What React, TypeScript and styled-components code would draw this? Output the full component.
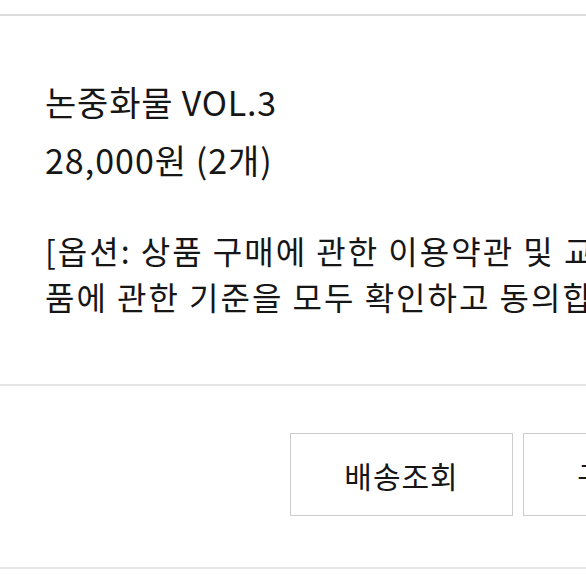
import React from 'react';
import styled, { createGlobalStyle } from 'styled-components';

const GlobalStyle = createGlobalStyle`
  body {
    margin: 0;
    background: #fff;
    overflow: hidden;
    font-family: 'Noto Sans CJK KR', 'Noto Sans', sans-serif;
    color: #161616;
  }
`;

type Action = { label: string };

const actions: Action[] = [{ label: '배송조회' }, { label: '구매확정' }];

const App: React.FC = () => {
  return (
    <>
      <GlobalStyle />
      <Page>
        <TopStrip />
        <Info>
          <Title>논중화물 VOL.3</Title>
          <Price>28,000원 (2개)</Price>
          <Option>
            [옵션: 상품 구매에 관한 이용약관 및 교환/반
            <br />
            품에 관한 기준을 모두 확인하고 동의합니다.]
          </Option>
        </Info>
        <Actions>
          {actions.map((a) => (
            <ActionButton key={a.label}>{a.label}</ActionButton>
          ))}
        </Actions>
      </Page>
    </>
  );
};

const Page = styled.main`
  width: 760px;
  display: flex;
  flex-direction: column;
`;

const TopStrip = styled.div`
  height: 14px;
  border-bottom: 2px solid #dddddd;
`;

const Info = styled.section`
  padding: 66px 0 65px 45px;
  display: flex;
  flex-direction: column;
`;

const Title = styled.h2`
  margin: 0 0 18px;
  font-size: 34px;
  line-height: 40px;
  font-weight: 400;
  letter-spacing: 0.8px;
  white-space: nowrap;
`;

const Price = styled.p`
  margin: 0 0 47px;
  font-size: 34px;
  line-height: 40px;
  font-weight: 400;
  letter-spacing: 1px;
  white-space: nowrap;
`;

const Option = styled.p`
  margin: 0;
  font-size: 32px;
  line-height: 46px;
  font-weight: 400;
  letter-spacing: 2px;
  white-space: nowrap;
`;

const Actions = styled.div`
  border-top: 2px solid #e4e4e4;
  border-bottom: 2px solid #e4e4e4;
  padding: 47px 14px 51px 0;
  display: flex;
  justify-content: flex-end;
  gap: 10px;
`;

const ActionButton = styled.button`
  width: 223px;
  height: 83px;
  background: #fff;
  border: 1px solid #cccccc;
  font-family: 'Noto Sans CJK KR', sans-serif;
  font-size: 30px;
  letter-spacing: 1px;
  color: #161616;
  padding: 0;
`;

export default App;
